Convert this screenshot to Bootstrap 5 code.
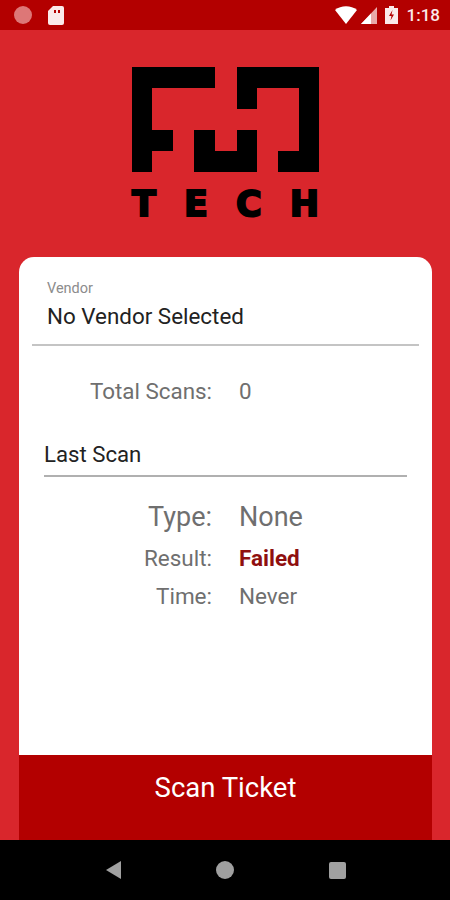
<!DOCTYPE html>
<html lang="en">

<head>
    <meta charset="UTF-8">
    <meta name="viewport" content="width=device-width, initial-scale=1.0">
    <title>Scan</title>
    <link href="https://cdn.jsdelivr.net/npm/bootstrap@5.3.0/dist/css/bootstrap.min.css" rel="stylesheet">
    <style>
        body {
            font-family: Roboto, sans-serif;
            background-color: #000;
        }

        .phone {
            width: 450px;
            height: 900px;
        }

        .status-bar {
            height: 30px;
            background-color: #b30000;
            padding: 0 10px 0 14px;
            color: #fbeaea;
        }

        .clock {
            font-size: 17px;
            font-weight: 500;
            margin-left: 9px;
            padding-top: 2px;
        }

        .main-area {
            background-color: #d9262c;
            padding: 37px 18px 0 19px;
        }

        .logo-box {
            height: 190px;
        }

        .tech-row {
            width: 187px;
            margin: 17px auto 0;
            height: 30px;
            font-family: "DejaVu Sans", sans-serif;
            font-size: 35px;
            font-weight: 700;
            line-height: 30px;
            color: #000;
            -webkit-text-stroke: 2px #000;
        }

        .scan-card {
            border-radius: 15px 15px 0 0;
            border: 0;
        }

        .vendor-box {
            margin: 0 13px;
            height: 89px;
            padding: 24px 15px 0;
            border-bottom: 2px solid #c4c4c4;
        }

        .vendor-label {
            font-size: 14.5px;
            line-height: 15px;
            color: #8c8c8c;
        }

        .vendor-name {
            font-size: 22.4px;
            line-height: 26px;
            margin-top: 7px;
            color: #222;
        }

        .info-row {
            display: grid;
            grid-template-columns: 193px 1fr;
            column-gap: 27px;
            color: #6f6f6f;
        }

        .info-row .lbl {
            text-align: right;
        }

        .total-row {
            font-size: 22.4px;
            line-height: 26px;
            margin-top: 32px;
        }

        .last-head {
            margin: 37px 25px 0;
            font-size: 22.2px;
            line-height: 26px;
            color: #222;
            padding-bottom: 8px;
            border-bottom: 2px solid #b0b0b0;
        }

        .type-row {
            font-size: 27px;
            line-height: 32px;
            margin-top: 24px;
        }

        .result-row {
            font-size: 22.5px;
            line-height: 26px;
            margin-top: 12px;
        }

        .time-row {
            font-size: 22.5px;
            line-height: 26px;
            margin-top: 12px;
        }

        .failed-text {
            color: #8f0f0f;
            font-weight: 700;
        }

        .scan-btn {
            height: 85px;
            background-color: #b30000;
            color: #fff;
            border: 0;
            border-radius: 0;
            font-size: 27.5px;
            padding-bottom: 26px;
        }

        .scan-btn:hover {
            background-color: #b30000;
            color: #fff;
        }

        .nav-bar {
            height: 60px;
            background-color: #000;
            padding-left: 106px;
            padding-right: 104px;
        }
    </style>
</head>

<body class="m-0">
    <div class="phone d-flex flex-column">
        <div class="status-bar d-flex align-items-center flex-shrink-0">
            <svg width="18" height="18" viewBox="0 0 18 18"><circle cx="9" cy="9" r="9" fill="#dd7777"/></svg>
            <svg class="ms-3" width="16" height="19" viewBox="0 0 16 19"><path d="M5 0h9a2 2 0 0 1 2 2v15a2 2 0 0 1-2 2H2a2 2 0 0 1-2-2V5z" fill="#fbeaea"/><rect x="6" y="4" width="2" height="3" fill="#b30000"/><rect x="10" y="4" width="2" height="3" fill="#b30000"/></svg>
            <div class="ms-auto d-flex align-items-center">
                <svg width="22" height="18" viewBox="0 0 22 18"><path d="M0 4C6-1 16-1 22 4L11 18z" fill="#fff"/></svg>
                <svg class="ms-1" width="16" height="17" viewBox="0 0 16 17"><path d="M0 17 16 0v17z" fill="#e9a9a9"/><path d="M0 17 10 6.500V17z" fill="#fff"/></svg>
                <svg class="battery-icon ms-2" width="13" height="18" viewBox="0 0 13 18"><path d="M4 2V0h5v2h4v16H0V2z" fill="#fbeaea"/><path d="M7.500 4 4 10h2.500l-1 4.500L9 8.500H6.500z" fill="#b30000"/></svg>
                <span class="clock">1:18</span>
            </div>
        </div>

        <div class="main-area d-flex flex-column flex-grow-1">
            <div class="logo-box flex-shrink-0">
                <svg class="d-block mx-auto" width="187" height="105" viewBox="0 0 187 105">
                    <path d="M0 0H83V21H20V63H41V84H20V105H0z" fill="#000"/>
                    <path d="M62 63H83V84H105V63H125V105H62z" fill="#000"/>
                    <path d="M105 0H187V105H146V84H167V21H125V42H105z" fill="#000"/>
                </svg>
                <div class="tech-row d-flex justify-content-between">
                    <span>T</span><span>E</span><span>C</span><span>H</span>
                </div>
            </div>

            <div class="scan-card card flex-grow-1 overflow-hidden">
                <div class="vendor-box flex-shrink-0">
                    <div class="vendor-label">Vendor</div>
                    <div class="vendor-name">No Vendor Selected</div>
                </div>
                <div class="info-row total-row">
                    <div class="lbl">Total Scans:</div>
                    <div>0</div>
                </div>
                <div class="last-head">Last Scan</div>
                <div class="info-row type-row">
                    <div class="lbl">Type:</div>
                    <div>None</div>
                </div>
                <div class="info-row result-row">
                    <div class="lbl">Result:</div>
                    <div class="failed-text">Failed</div>
                </div>
                <div class="info-row time-row">
                    <div class="lbl">Time:</div>
                    <div>Never</div>
                </div>
                <button class="scan-btn btn w-100 mt-auto flex-shrink-0">Scan Ticket</button>
            </div>
        </div>

        <div class="nav-bar d-flex align-items-center justify-content-between flex-shrink-0">
            <svg width="15" height="18" viewBox="0 0 15 18"><path d="M15 0V18L0 9z" fill="#a0a0a0"/></svg>
            <svg width="18" height="18" viewBox="0 0 18 18"><circle cx="9" cy="9" r="9" fill="#a0a0a0"/></svg>
            <svg width="17" height="17" viewBox="0 0 17 17"><rect width="17" height="17" rx="2" fill="#a0a0a0"/></svg>
        </div>
    </div>

    <script src="https://cdn.jsdelivr.net/npm/bootstrap@5.3.0/dist/js/bootstrap.bundle.min.js"></script>
</body>

</html>
